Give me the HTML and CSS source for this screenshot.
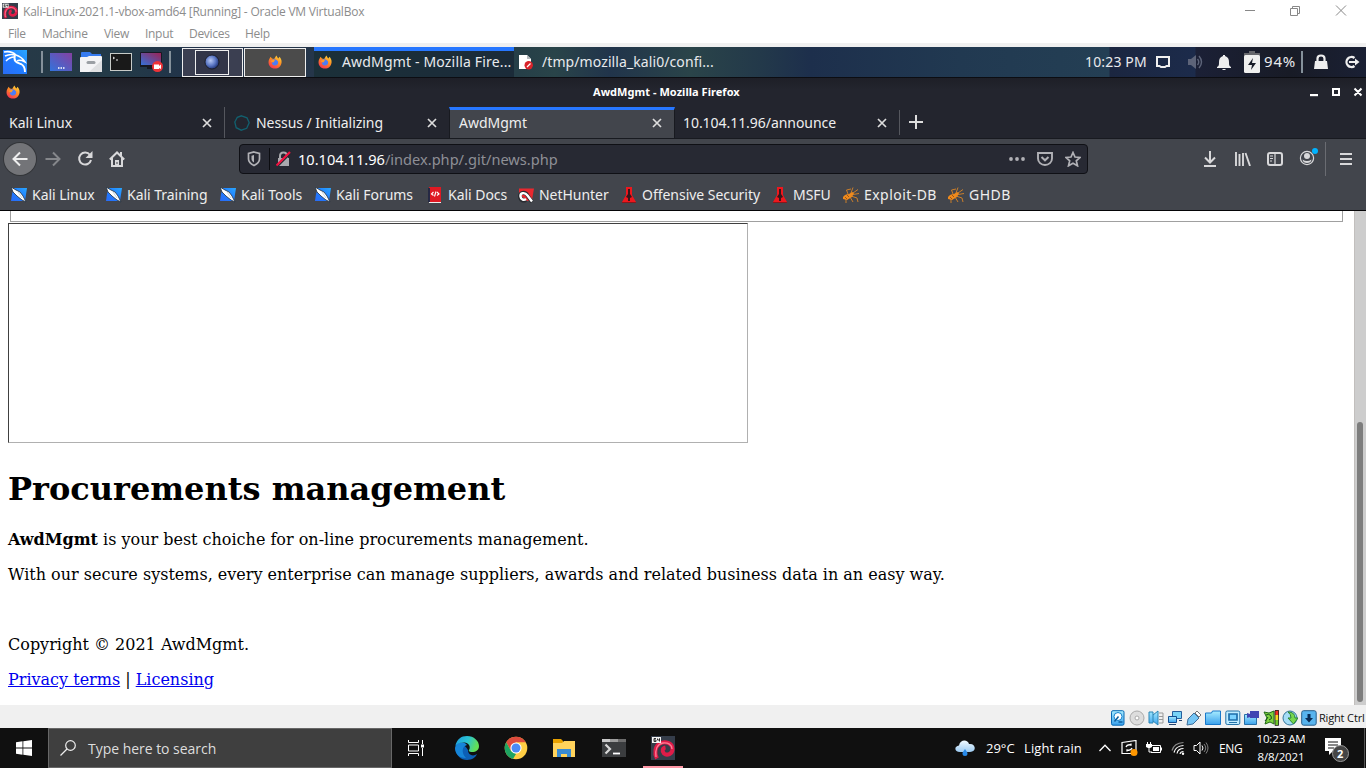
FILE: index.html
```html
<!DOCTYPE html>
<html lang="en">
<head>
<meta charset="utf-8">
<title>AwdMgmt</title>
<link rel="stylesheet" href="styles.css">
</head>
<body>
<svg class="defs" aria-hidden="true">
  <defs>
    <linearGradient id="gBlue" x1="0" y1="1" x2="1" y2="0"><stop offset="0" stop-color="#2a6cf5"/><stop offset=".5" stop-color="#1f7cff"/><stop offset="1" stop-color="#2aa8ff"/></linearGradient>
    <linearGradient id="gDesk" x1="0" y1="1" x2="1" y2="0"><stop offset="0" stop-color="#3273dc"/><stop offset="1" stop-color="#8540a0"/></linearGradient>
    <linearGradient id="gRec" x1="0" y1="1" x2="1" y2="0"><stop offset="0" stop-color="#3273dc"/><stop offset="1" stop-color="#a02050"/></linearGradient>
    <linearGradient id="gFox" x1=".8" y1="0" x2=".2" y2="1"><stop offset="0" stop-color="#ffd83a"/><stop offset=".45" stop-color="#ff8a22"/><stop offset="1" stop-color="#f52d55"/></linearGradient>
    <radialGradient id="gOrb" cx=".4" cy=".4" r=".6"><stop offset="0" stop-color="#b8c8f4"/><stop offset=".6" stop-color="#5a76c4"/><stop offset="1" stop-color="#24387c"/></radialGradient>
    <linearGradient id="gEdge" x1="0" y1="0" x2="1" y2=".3"><stop offset="0" stop-color="#1b9de2"/><stop offset=".55" stop-color="#2bc3d2"/><stop offset="1" stop-color="#62e055"/></linearGradient>
    <linearGradient id="gCloud" x1="0" y1="0" x2="0" y2="1"><stop offset="0" stop-color="#f2faff"/><stop offset="1" stop-color="#9ccbf2"/></linearGradient>
    <linearGradient id="gVb" x1="0" y1="0" x2="0" y2="1"><stop offset="0" stop-color="#a8ecff"/><stop offset="1" stop-color="#39a0ec"/></linearGradient>
  </defs>
  <symbol id="debian" viewBox="0 0 24 24"><path fill="#353d4a" d="M0 0h24v24H0z"/><path d="M6 22.500C3 17 4 10 9 7.500c5-3 12.500-.5 12.500 5.500 0 5-5.500 7-8.500 4.500-2.300-2.300-1.500-5.500 1.500-6" fill="none" stroke="#e01c48" stroke-width="4"/><path d="M5 21c-1-7 1-13 7-14 5-.8 9 2 9 6" fill="none" stroke="#ff7a94" stroke-width="1.400"/><path fill="#f4f4f4" d="M1 1h9v6H1z"/><path d="M5 2.500H3v3h2V4H3M6.500 2.500V4h2V2.500v3" fill="none" stroke="#222" stroke-width=".9"/></symbol>
  <symbol id="kali" viewBox="0 0 24 24"><path fill="url(#gBlue)" d="M0 0h24v24H0z"/><path d="M1 2c5-1 9 0 12 3 3 1 6 2 9 7l-3-1.500c-2-.5-4-.5-5 .5M2 6c4-2 7-2 10-1M3 11c3-3 5-4 8-4" fill="none" stroke="#fff" stroke-width="1.500"/><path d="M12 5c-2 7 2 7.500 6 9 3 1.500 4 4 4 8" fill="none" stroke="#fff" stroke-width="1.900"/></symbol>
  <symbol id="kbm" viewBox="0 0 16 16"><path fill="url(#gBlue)" d="M3 1h13l-2 13H0L1 7z"/><path d="M0 0l5 3 4 2 3 4 3 6-4-2-5-4-4-4z" fill="#fff" stroke="#203040" stroke-width=".8"/><path d="M7 5l4 6" stroke="#b9c9d6" stroke-width=".8"/></symbol>
  <symbol id="desk" viewBox="0 0 22 18"><path fill="url(#gDesk)" d="M0 0h22v18H0z"/><path d="M8 15h1.500m1 0H12m1 0h1.500" stroke="#fff" stroke-width="1.500"/></symbol>
  <symbol id="folder" viewBox="0 0 22 20"><path fill="#367bf0" d="M1 1q0-1 1-1h8l2 2h9v6H1z"/><path fill="#f3f3f5" d="M0 6q0-1 1-1h6l2-1h12q1 0 1 1v15H0z"/><path fill="#dfe0e2" d="M22 8v12H9z"/><rect x="6.500" y="9" width="9" height="3" rx="1.500" fill="#9b9fa4"/></symbol>
  <symbol id="term" viewBox="0 0 22 18"><rect x=".5" y=".5" width="21" height="17" fill="#191919" stroke="#c7cbc8"/><path d="M3 4l1.500 1L3 6m3 1h2" fill="none" stroke="#eee"/></symbol>
  <symbol id="rec" viewBox="0 0 24 20"><path fill="url(#gRec)" stroke="#171924" d="M.5.5h21v13H.5z"/><path fill="#161821" d="M0 13h22v2h-8v2H7v-2H0z"/><circle cx="17.500" cy="14.500" r="5.500" fill="#ec3338"/><path fill="#fff" d="M14 12.500h5V17h-5zM19 14l2-1.500V17l-2-1z"/></symbol>
  <symbol id="orb" viewBox="0 0 16 16"><circle cx="8" cy="8" r="7" fill="url(#gOrb)" stroke="#15151c" stroke-width=".8"/></symbol>
  <symbol id="fox" viewBox="0 0 16 16"><path fill="url(#gFox)" d="M1.500 4.500L3 2l1.500 2L7 4.500 9.500.5c1 1 1 2.500 2.500 3.500l1-2c2 2 2.700 4 2.500 6.500-.4 4.200-3.500 7-7.500 7C3 15.500.5 12 .6 8c.1-1.600.4-2.600.9-3.500z"/><path fill="#4b7cf5" d="M4.500 5.500c3-1.500 6 0 7 2 .6 3-1.500 4.700-4 4.500C5.500 12 4.300 10 4.500 8.500L6.500 8z"/><path fill="#ff9a2a" d="M3 7l3-2 2 1-2 2.500z"/></symbol>
  <symbol id="doc" viewBox="0 0 14 16"><path fill="#fff" d="M0 1h8l4 4v10H0z"/><path fill="#b5b9bd" d="M8 1l4 4H8z"/><circle cx="9.700" cy="11.300" r="4.200" fill="#d9232a"/><path d="M8 13l3.500-3.500" stroke="#fff" stroke-width="1.200"/></symbol>
  <symbol id="screen" viewBox="0 0 14 12"><path d="M1 1h12v9H10.500L9 11H5L3.500 10H1z" fill="none" stroke="#f0f0f0" stroke-width="2"/></symbol>
  <symbol id="vol" viewBox="0 0 16 16"><path fill="#5d6479" d="M1 5h3l5-4v14l-5-4H1z"/><path d="M10.500 5q2.500 3 0 6M12 2q5 6 0 12" fill="none" stroke="#5d6479" stroke-width="1.400"/></symbol>
  <symbol id="bell" viewBox="0 0 14 15"><path fill="#eee" d="M6 0h2v1c3 1 4 3 4 6 0 3 0 4 2 5v1H0v-1c2-1 2-2 2-5 0-3 1-5 4-6zM5 14h4l-1 1H6z"/></symbol>
  <symbol id="batt" viewBox="0 0 16 22"><path fill="#66676c" d="M5 0h6v2h5v4H0V2h5z"/><rect y="4" width="16" height="18" rx="1.500" fill="#f0f0ef"/><path fill="#171b26" d="M9 7l-5 7h4l-1 5 5-7H8z"/></symbol>
  <symbol id="lock" viewBox="0 0 14 16"><path fill="#eee" d="M1 7h12l1 8H0z"/><path d="M3.500 8V4.500q0-3 3.500-3t3.500 3V8" fill="none" stroke="#eee" stroke-width="2.200"/></symbol>
  <symbol id="logout" viewBox="0 0 16 14"><path d="M10.500 3A5 5 0 1 0 10.500 11" fill="none" stroke="#eee" stroke-width="2.300"/><path d="M5 7h7" stroke="#eee" stroke-width="2"/><path fill="#eee" d="M11 3.500L15.500 7 11 10.500z"/></symbol>
  <symbol id="x" viewBox="0 0 10 10"><path d="M1 1l8 8M9 1L1 9" stroke="currentColor" stroke-width="1.700"/></symbol>
  <symbol id="nessus" viewBox="0 0 16 16"><path d="M7.500.8l5.500 2 2.200 5-2.500 5.500-5.500 1.900-5-2.500L.8 7l2.500-4.700z" fill="none" stroke="#12606f" stroke-width="1.300"/></symbol>
  <symbol id="back" viewBox="0 0 16 16"><path d="M15.500 8H1.500M8 1.500L1.500 8 8 14.500" fill="none" stroke="currentColor" stroke-width="2"/></symbol>
  <symbol id="reload" viewBox="0 0 16 16"><path d="M13 4A6 6 0 1 0 14 9" fill="none" stroke="#d8d8da" stroke-width="2"/><path fill="#d8d8da" d="M15.500 0v7h-7z"/></symbol>
  <symbol id="home" viewBox="0 0 16 16"><path d="M.8 8.500L8 1.500l7.200 7M3 7v8h10V7" fill="none" stroke="#d8d8da" stroke-width="2"/><path fill="#d8d8da" d="M11 1h2v4h-2zM6 9h4v6H6z"/><path fill="#42454c" d="M7.500 11h1v2h-1z"/></symbol>
  <symbol id="shield" viewBox="0 0 14 16"><path d="M7 1l5.500 1.500V8c0 3-2.500 5-5.500 6.500C4 13 1.500 11 1.500 8V2.500z" fill="none" stroke="#b1b1b6" stroke-width="1.700"/><path fill="#b1b1b6" d="M7 4l-2.500.8V8c0 2 1.500 3 2.500 3.500z"/></symbol>
  <symbol id="nolock" viewBox="0 0 16 16"><path fill="#a9a9ae" d="M2 7h11v8H2z"/><path d="M4 7V5q0-3.500 3.500-3.500T11 5v2" fill="none" stroke="#a9a9ae" stroke-width="2"/><path d="M1.500 15.500L15 2" stroke="#272933" stroke-width="1.500"/><path d="M.5 14.500L14 1" stroke="#f3103f" stroke-width="2.200"/></symbol>
  <symbol id="dots" viewBox="0 0 16 4"><g fill="#b1b1b6"><circle cx="2" cy="2" r="1.900"/><circle cx="8" cy="2" r="1.900"/><circle cx="14" cy="2" r="1.900"/></g></symbol>
  <symbol id="pocket" viewBox="0 0 16 14"><path d="M1 1h14v5.500a7 6.500 0 0 1-14 0z" fill="none" stroke="#b1b1b6" stroke-width="1.900"/><path d="M4.500 5L8 8.300 11.500 5" fill="none" stroke="#b1b1b6" stroke-width="2"/></symbol>
  <symbol id="star" viewBox="0 0 16 16"><path d="M8 1.500l2 4.500 5 .5-3.700 3.300 1.200 5L8 12.200l-4.500 2.600 1.200-5L1 6.500 6 6z" fill="none" stroke="#b1b1b6" stroke-width="1.700"/></symbol>
  <symbol id="down" viewBox="0 0 12 16"><path d="M6 0v11M1 6.500l5 5 5-5M0 15h12" fill="none" stroke="#d8d8da" stroke-width="2"/></symbol>
  <symbol id="lib" viewBox="0 0 16 14"><path d="M1 0v14M4.500 2v12M8 1v13M10.500 1L15 14" fill="none" stroke="#d8d8da" stroke-width="1.900"/></symbol>
  <symbol id="side" viewBox="0 0 16 14"><rect x="1" y="1" width="14" height="12" rx="2" fill="none" stroke="#d8d8da" stroke-width="2"/><path d="M8 1v12M3 4h3M3 6.500h3M3 9h2" stroke="#d8d8da" stroke-width="1.200"/></symbol>
  <symbol id="acct" viewBox="0 0 20 20"><circle cx="8" cy="11" r="6.600" fill="none" stroke="#d8d8da" stroke-width="1.200"/><circle cx="8" cy="9" r="3" fill="#d8d8da"/><path fill="#d8d8da" d="M3.500 12.500q4.500 3 9 0Q12 16 8 16t-4.500-3.500z"/><circle cx="16" cy="4" r="3" fill="#00b3ff"/></symbol>
  <symbol id="burger" viewBox="0 0 12 12"><path d="M0 1h12M0 6h12M0 11h12" stroke="#d8d8da" stroke-width="2"/></symbol>
  <symbol id="docs" viewBox="0 0 14 16"><path fill="#df1923" d="M1 0h12v15H1z"/><path fill="#262944" d="M0 1h2v14H0z"/><path fill="#eee" d="M1 15h12v1H1z"/><path d="M5.500 5L3.500 7l2 1.500M9 5l2 2-2 1.500M8 4.500l-1.500 5" fill="none" stroke="#fff" stroke-width="1.100"/></symbol>
  <symbol id="net" viewBox="0 0 16 16"><path fill="#e9282f" d="M1 1.500h15L14 13l-5 1L1 7z"/><path d="M14 15L9.500 8.500C7 4 1 5.500 2 10s4 4 6 3" fill="none" stroke="#282b30" stroke-width="3.800"/><path d="M14 14.500L9.500 8.500C6.500 4.500 2 6 2.500 9.500S6 13.500 8 12" fill="none" stroke="#fff" stroke-width="2.400"/></symbol>
  <symbol id="offsec" viewBox="0 0 14 16"><path fill="#ed171d" d="M4 0h6v8l4 7H0l4-7z"/><path fill="#35171b" d="M6 2h2v5l2 3-2 1v3H6v-3l-2-1 2-3z"/><path fill="#8a161b" d="M0 15h14v1H0z"/></symbol>
  <symbol id="bug" viewBox="0 0 16 16"><path fill="#ef8a1c" d="M0 10q2-3 6-3l3-2 2 1-2 4-5 3-4-1z"/><path d="M5 7L3.500 3 8 2M8 6l2-5.500M10 6l5-3.500M10 7.500l6-1M8 9l6 2 1 4M7 10l3 5M3 12l0 4" fill="none" stroke="#d98427" stroke-width=".9"/><path d="M2 10l2 2m0-4l2 2" stroke="#9c5512"/></symbol>
  <symbol id="win" viewBox="0 0 16 16"><path fill="#fff" d="M0 2.300L6.500 1.300v6.300H0zM7.300 1.200L16 0v7.600H7.300zM0 8.400h6.500v6.300L0 13.700zM7.300 8.400H16V16l-8.700-1.200z"/></symbol>
  <symbol id="search" viewBox="0 0 16 16"><circle cx="10.500" cy="5.500" r="4.800" fill="none" stroke="#eee" stroke-width="1.200"/><path d="M7 9L.5 15.500" stroke="#eee" stroke-width="1.300"/></symbol>
  <symbol id="tasks" viewBox="0 0 16 16"><path d="M.5 0v2.500h10V0M.5 16v-2.500h10V16M.5 5h10v6H.5zM14.500 0v4M14.500 8v8" fill="none" stroke="#fff"/><path fill="#fff" d="M13 4.500h3v3h-3z"/></symbol>
  <symbol id="edge" viewBox="0 0 24 24"><path fill="#0c5fb5" d="M1 8C-1 18 5 24 12 24c5 0 9-3 10-6-4 3-9 1-9-4-3-6-10-8-12-6z"/><path fill="#1685d8" d="M0 12C2 5 9 5 12 9c-5 1-6 8-1 13C4 22 0 18 0 12z"/><path fill="url(#gEdge)" d="M.3 10C2 3 6 0 12 0c7 0 12 5 12 10 0 4-3 6-7 6-3 0-4-1-2.500-3 1-3-1-6-5-6.500C5 6 1.500 8 .3 10z"/></symbol>
  <symbol id="chrome" viewBox="0 0 24 24"><circle cx="12" cy="12" r="11.300" fill="#ffce44"/><path fill="#dd4b3e" d="M2.200 6.300A11.300 11.300 0 0 1 21.800 6.300H12L7 15z"/><path fill="#1da462" d="M2.200 6.300l4.800 8.700 5 3-3 4.900A11.300 11.300 0 0 1 2.200 6.300z"/><circle cx="12" cy="12" r="5.600" fill="#fff"/><circle cx="12" cy="12" r="4.500" fill="#4a8af4"/></symbol>
  <symbol id="explorer" viewBox="0 0 22 19"><path fill="#e8a100" d="M0 0h8l2 2v4H0z"/><path fill="#ffd35c" d="M0 4h9l2-2h11v16H0z"/><path fill="#398bd2" d="M4 10h14v8h-4v-3H8v3H4z"/></symbol>
  <symbol id="cmd" viewBox="0 0 24 18"><path fill="#3b3d3f" d="M0 0h24v18H0z"/><path fill="#c9c9c9" d="M0 0h8v3H0z"/><path fill="#9d9d9d" d="M8 0h8v3H8z"/><path fill="#6d6d6d" d="M16 0h8v3h-8z"/><path d="M3.500 5.500L8 10l-4.500 4.500" fill="none" stroke="#d8d8d8" stroke-width="2.200"/><path d="M11 14.500h7" stroke="#fff" stroke-width="1.800"/></symbol>
  <symbol id="weather" viewBox="0 0 20 16"><path fill="url(#gCloud)" d="M5 12C-1 12-1 6 4 5.500 5-1 13-1 14 4c7-1 8 8 1 8z"/><path fill="#2789e8" d="M10 9c2 3 2.500 3.500 2.500 4.500a2.500 2.500 0 0 1-5 0C7.500 12.500 8 12 10 9z"/></symbol>
  <symbol id="chev" viewBox="0 0 12 8"><path d="M.5 7L6 1.200 11.500 7" fill="none" stroke="#fff" stroke-width="1.300"/></symbol>
  <symbol id="upd" viewBox="0 0 17 16"><path d="M1 2.500l14-2v13H1z" fill="none" stroke="#fff" stroke-width="1.200"/><path d="M5 7q1-3 5-2V3.500M11 8q-1 3-5 2v1.500" fill="none" stroke="#fff" stroke-width="1.300"/><circle cx="13" cy="12.500" r="3.500" fill="#ff9700"/></symbol>
  <symbol id="plug" viewBox="0 0 16 12"><path d="M5 3.500h9.500v7H5" fill="none" stroke="#fff"/><path fill="#fff" d="M7 5h6v4H7zM15 5.500h1v3h-1zM0 2h6v3L4 6H2L0 5z"/><path d="M1.500 0v2M4.500 0v2M3 6v4h3" stroke="#fff" fill="none"/></symbol>
  <symbol id="wifi" viewBox="0 0 14 14"><g fill="none" stroke-width="1.200"><path stroke="#888" d="M1 9.500Q3 2 12.500 1.500"/><path stroke="#fff" d="M3 11.500Q4.500 5 12.500 4.500M6 12.500q1-5 6.500-5M9 13q.5-2.500 3.500-2.500"/></g><circle cx="12" cy="12.700" r="1.200" fill="#fff"/></symbol>
  <symbol id="snd" viewBox="0 0 16 14"><path d="M1 4.500h2.500L7 1v12L3.500 9.500H1z" fill="none" stroke="#fff"/><path d="M9 4.500q2 2.500 0 5" fill="none" stroke="#fff"/><path d="M11 3q3.500 4 0 8M13 1.500q4 5.500 0 11" fill="none" stroke="#808080"/></symbol>
  <symbol id="note" viewBox="0 0 24 24"><path fill="#fff" d="M0 0h16v13H8l-4 4v-4H0z"/><path d="M3 4h10M3 7h10M3 10h6" stroke="#101010"/><circle cx="15.500" cy="15.500" r="8" fill="#454545" stroke="#999"/></symbol>
  <symbol id="v1" viewBox="0 0 15 16"><rect x="1" y=".7" width="12.500" height="14.500" rx="1.500" fill="url(#gVb)" stroke="#0869b4"/><circle cx="7.500" cy="6.500" r="4" fill="#fff" stroke="#1682cd"/><path d="M8 6.500l-4 5M8 12h4" stroke="#0d5f9f" stroke-width="1.500"/></symbol>
  <symbol id="v2" viewBox="0 0 16 16"><circle cx="8" cy="8" r="7" fill="#ddd" stroke="#aaa"/><circle cx="8" cy="8" r="2" fill="#fff" stroke="#aaa"/></symbol>
  <symbol id="v3" viewBox="0 0 16 16"><path d="M1 2h4v11H1zM5 5l5-4v14l-5-4" fill="url(#gVb)" stroke="#2b85b5"/><path d="M11 3h4v10h-4M11 6.500h4M11 9.500h4" fill="none" stroke="#999"/></symbol>
  <symbol id="v4" viewBox="0 0 16 16"><path fill="#78d3f6" stroke="#265f9d" d="M5.500 1.500h9v7h-9z"/><path fill="url(#gVb)" stroke="#124f93" d="M1.500 6.500h8v6h-8z"/><path d="M2 14.500h7M12 10.500h3" stroke="#26446f"/></symbol>
  <symbol id="v5" viewBox="0 0 16 16"><path d="M1 15l1-6 6-6 5 5-6 6z" fill="#76c6f5" stroke="#3e6e9a"/><path d="M9 3l2-2 4 4-2 2z" fill="#fff" stroke="#777"/></symbol>
  <symbol id="v6" viewBox="0 0 16 16"><path d="M.5 3h6l1-2h8v13.500H.5z" fill="url(#gVb)" stroke="#1878ca"/></symbol>
  <symbol id="v7" viewBox="0 0 16 16"><rect x=".8" y="1" width="14" height="13.500" rx="1.500" fill="#c1ecff" stroke="#2472a8"/><path d="M4 4h8v6H4z" fill="#7bd2ff" stroke="#1e6dab" stroke-width="1.700"/><path d="M4 12.500h8" stroke="#2472a8"/></symbol>
  <symbol id="v8" viewBox="0 0 16 16"><path fill="url(#gVb)" stroke="#276fa6" d="M.5 4.500h12v10H.5z"/><path fill="#4145b2" d="M6 1h9v7H6zM3 3l3 1v3L3 8z"/></symbol>
  <symbol id="v9" viewBox="0 0 16 16"><path fill="#7dd13f" stroke="#226a19" d="M1 2l5 1 5-2v13l-4-2-5 2 2-6z"/><path d="M3 5q3-2 5 1t-2 4M5 7l-3 4" fill="none" stroke="#114f19"/><path fill="#ef2e22" d="M12 0h4v6h-4z"/><path fill="#f4d821" d="M12 5h4v5h-4z"/><path fill="#6fc52e" d="M12 10h4v5h-4z"/><path d="M12 .5h3.500v15H12z" fill="none" stroke="#222" stroke-width=".8"/></symbol>
  <symbol id="v10" viewBox="0 0 16 16"><circle cx="8" cy="8" r="7" fill="#a4dcf6" stroke="#34749a"/><path d="M6 2q7 0 7 6h3l-4.500 6L6 8h3q0-4-3-6z" fill="#77d64e" stroke="#298533"/></symbol>
  <symbol id="v11" viewBox="0 0 16 16"><rect x=".7" y=".7" width="14.500" height="14.500" rx="2" fill="#58b4ee" stroke="#285e8b"/><path d="M6.500 4h3v4H12l-4 4.500L4 8h2.500z" fill="#092b54"/></symbol>
</svg>

<header class="vm-title">
  <svg class="i16"><use href="#debian"/></svg>
  <span class="vm-name">Kali-Linux-2021.1-vbox-amd64 [Running] - Oracle VM VirtualBox</span>
  <svg class="vm-ctl" viewBox="0 0 104 12"><g fill="none" stroke="#888"><path d="M0 6.500h10M45.500 4.500h7v7h-7zM47.500 4V2.500h7v7H53M91 1.500l10 10M101 1.500l-10 10"/></g></svg>
</header>
<nav class="vm-menu"><span>File</span><span>Machine</span><span>View</span><span>Input</span><span>Devices</span><span>Help</span></nav>

<section class="panel">
  <svg class="kali-ic"><use href="#kali"/></svg><i class="sep"></i>
  <svg class="p1"><use href="#desk"/></svg><svg class="p2"><use href="#folder"/></svg><svg class="p1"><use href="#term"/></svg><svg class="p3"><use href="#rec"/></svg><i class="sep"></i>
  <div class="pager"><div class="mini"><svg class="i16"><use href="#orb"/></svg></div></div>
  <div class="pager lit"><svg class="i14"><use href="#fox"/></svg></div>
  <div class="task active"><svg class="i14"><use href="#fox"/></svg><span class="t1">AwdMgmt - Mozilla Fire...</span></div>
  <div class="task"><svg class="i-doc"><use href="#doc"/></svg><span class="t2">/tmp/mozilla_kali0/confi...</span></div>
  <span class="clock">10:23 PM</span>
  <svg class="s-screen"><use href="#screen"/></svg><svg class="i16"><use href="#vol"/></svg><svg class="s-bell"><use href="#bell"/></svg><svg class="s-batt"><use href="#batt"/></svg>
  <span class="pct">94%</span><i class="sep"></i><svg class="s-lock"><use href="#lock"/></svg><svg class="s-out"><use href="#logout"/></svg>
</section>

<section class="fx-title">
  <svg class="i14"><use href="#fox"/></svg><span>AwdMgmt - Mozilla Firefox</span>
  <svg class="fx-ctl" viewBox="0 0 54 10"><path fill="#fff" d="M0 7h8v2.200H0z"/><path d="M23 2h6v6h-6zM44.500 1.500l7 7M51.500 1.500l-7 7" fill="none" stroke="#fff" stroke-width="2"/></svg>
</section>

<nav class="tabs">
  <div class="tab"><span>Kali Linux</span><svg class="close"><use href="#x"/></svg></div>
  <div class="tab split"><svg class="i16"><use href="#nessus"/></svg><span>Nessus / Initializing</span><svg class="close"><use href="#x"/></svg></div>
  <div class="tab on"><span>AwdMgmt</span><svg class="close"><use href="#x"/></svg></div>
  <div class="tab last"><span>10.104.11.96/announce</span><svg class="close"><use href="#x"/></svg></div>
  <div class="newtab"><svg viewBox="0 0 14 14"><path d="M7 0v14M0 7h14" stroke="#ddd" stroke-width="2"/></svg></div>
</nav>

<section class="navbar">
  <div class="back"><svg class="i16"><use href="#back"/></svg></div>
  <svg class="i16 fwd"><use href="#back"/></svg><svg class="i16"><use href="#reload"/></svg><svg class="i16"><use href="#home"/></svg>
  <div class="url">
    <svg class="u-shield"><use href="#shield"/></svg><i></i><svg class="i16"><use href="#nolock"/></svg>
    <span><b>10.104.11.96</b>/index.php/.git/news.php</span>
    <svg class="u-dots"><use href="#dots"/></svg><svg class="u-pocket"><use href="#pocket"/></svg><svg class="i16"><use href="#star"/></svg>
  </div>
  <svg class="n-down"><use href="#down"/></svg><svg class="n-lib"><use href="#lib"/></svg><svg class="n-lib"><use href="#side"/></svg><svg class="n-acct"><use href="#acct"/></svg><i class="n-sep"></i><svg class="n-burger"><use href="#burger"/></svg>
</section>

<nav class="marks">
  <a><svg class="i16"><use href="#kbm"/></svg>Kali Linux</a>
  <a><svg class="i16"><use href="#kbm"/></svg>Kali Training</a>
  <a><svg class="i16"><use href="#kbm"/></svg>Kali Tools</a>
  <a><svg class="i16"><use href="#kbm"/></svg>Kali Forums</a>
  <a><svg class="i16"><use href="#docs"/></svg>Kali Docs</a>
  <a><svg class="i16"><use href="#net"/></svg>NetHunter</a>
  <a><svg class="i16"><use href="#offsec"/></svg>Offensive Security</a>
  <a><svg class="i16"><use href="#offsec"/></svg>MSFU</a>
  <a class="wide"><svg class="i16"><use href="#bug"/></svg>Exploit-DB</a>
  <a class="wide"><svg class="i16"><use href="#bug"/></svg>GHDB</a>
</nav>

<main class="view">
  <article class="doc">
    <div class="cell"></div>
    <div class="frame"></div>
    <h1>Procurements management</h1>
    <p><b>AwdMgmt</b> is your best choiche for on-line procurements management.</p>
    <p>With our secure systems, every enterprise can manage suppliers, awards and related business data in an easy way.</p>
    <p>&nbsp;</p>
    <p>Copyright © 2021 AwdMgmt.</p>
    <p><a href="#">Privacy terms</a> | <a href="#">Licensing</a></p>
  </article>
  <div class="scroll"><div class="thumb"></div></div>
</main>

<footer class="vm-status">
  <svg><use href="#v1"/></svg><svg><use href="#v2"/></svg><svg><use href="#v3"/></svg><svg><use href="#v4"/></svg><svg><use href="#v5"/></svg><svg><use href="#v6"/></svg><svg><use href="#v7"/></svg><svg><use href="#v8"/></svg><svg><use href="#v9"/></svg><svg><use href="#v10"/></svg><svg><use href="#v11"/></svg><span>Right Ctrl</span>
</footer>

<footer class="taskbar">
  <div class="start"><svg class="i16"><use href="#win"/></svg></div>
  <div class="searchbox"><svg class="i16"><use href="#search"/></svg><span>Type here to search</span></div>
  <div class="app"><svg class="i16"><use href="#tasks"/></svg></div>
  <div class="app"><svg class="i24"><use href="#edge"/></svg></div>
  <div class="app"><svg class="i24"><use href="#chrome"/></svg></div>
  <div class="app"><svg class="a-exp"><use href="#explorer"/></svg></div>
  <div class="app"><svg class="a-cmd"><use href="#cmd"/></svg></div>
  <div class="app running"><svg class="i24"><use href="#debian"/></svg></div>
  <svg class="w-weather"><use href="#weather"/></svg><span class="w-temp">29°C</span><span class="w-rain">Light rain</span>
  <svg class="w-chev"><use href="#chev"/></svg><svg class="w-upd"><use href="#upd"/></svg><svg class="w-plug"><use href="#plug"/></svg><svg class="w-wifi"><use href="#wifi"/></svg><svg class="w-snd"><use href="#snd"/></svg>
  <span class="w-eng">ENG</span>
  <div class="w-time"><span>10:23 AM</span><span>8/8/2021</span></div>
  <div class="w-note"><svg><use href="#note"/></svg><b>2</b></div>
  <i class="peek"></i>
</footer>
</body>
</html>
```

FILE: styles.css
```css
* { box-sizing: border-box; }
body { margin: 0; width: 1366px; height: 768px; overflow: hidden; background: #fff; font-family: "Noto Sans", sans-serif; font-size: 14px; white-space: nowrap; }
svg { display: block; flex: none; }
.defs { position: absolute; width: 0; height: 0; }
.i14 { width: 14px; height: 14px; }
.i16 { width: 16px; height: 16px; }
.i24 { width: 24px; height: 24px; }

/* VirtualBox window chrome */
.vm-title { height: 24px; display: grid; grid-template-columns: 21px 1222px 104px; padding-left: 2px; align-items: center; font: 12px "Open Sans", sans-serif; color: #8c8c8c; }
.vm-title .i16 { margin-top: -2px; }
.vm-name { letter-spacing: -0.22px; margin-top: -1px; }
.vm-ctl { width: 104px; height: 12px; margin-top: -4px; }
.vm-menu { height: 23px; border-bottom: 4px solid #f0f0f0; display: grid; grid-template-columns: 34px 62px 41px 44px 56px auto; padding-left: 8px; align-items: center; font: 12px "Open Sans", sans-serif; letter-spacing: -0.3px; color: #8c8c8c; }

/* Desktop panel */
.panel { height: 30px; display: grid; grid-template-columns: 38px 9px 30px 30px 30px 29px 13px 62px 70px 200px 571px 71px 31px 30px 27px 20px 37px 13px 30px 20px; padding-left: 3px; align-items: center; color: #e8eaed; background: linear-gradient(90deg, #273947 0, #233a47 120px, #21324a 200px, #25364a 314px, #263f48 520px, #294449 555px, #21344b 610px, #2a4449 690px, #23394a 760px, #1d2f4c 810px, #213951 960px, #243f54 1109px, #1b2640 1110px, #1c2b4b 1195px, #1b2036 1196px, #181b26 1290px, #1a2034 1366px); }
.panel span { margin-top: -2px; }
.kali-ic { width: 24px; height: 24px; }
.sep { width: 2px; height: 22px; background: #85919b; }
.p1 { width: 22px; height: 18px; }
.p2 { width: 22px; height: 20px; }
.p3 { width: 24px; height: 20px; }
.pager { width: 61px; height: 29px; border: 1px solid #eee; background: #3b3f51; display: flex; align-items: center; justify-content: center; }
.pager.lit { width: 62px; background: #4b4b4b; }
.mini { width: 34px; height: 25px; margin-right: 2px; border: 1px solid #eee; background: #323548; display: flex; align-items: center; justify-content: center; }
.task { height: 30px; display: flex; align-items: center; padding-left: 4px; gap: 10px; }
.task.active { border-top: 4px solid #2777ff; background: linear-gradient(90deg, #1b3039, #1b2b39); padding-bottom: 4px; }
.i-doc { width: 14px; height: 16px; margin-left: 1px; margin-right: -1px; }
.t1 { letter-spacing: 0.17px; }
.t2 { letter-spacing: 0.09px; }
.clock { letter-spacing: 0.15px; }
.s-screen { width: 14px; height: 12px; }
.s-bell { width: 14px; height: 15px; }
.s-batt { width: 16px; height: 22px; }
.pct { font-size: 15px; letter-spacing: 0.8px; }
.s-lock { width: 14px; height: 16px; }
.s-out { width: 16px; height: 14px; }

/* Browser title and tabs */
.fx-title { height: 30px; border-top: 1px solid #0c0d12; background: linear-gradient(#1e1f27, #23252e 12px); display: grid; grid-template-columns: 587px 717px 54px; padding: 0 0 2px 6px; align-items: center; color: #fff; font-size: 11px; font-weight: 700; letter-spacing: 0.04px; }
.fx-title .i14 { margin-top: 1px; }
.fx-ctl { width: 54px; height: 10px; margin-top: 1px; }
.tabs { height: 32px; background: #23252e; border-bottom: 1px solid #181a20; display: grid; grid-template-columns: 224px 225px 226px 224px auto; color: #eee; }
.tab { display: flex; align-items: center; padding: 0 12px 0 9px; }
.tab span { margin-top: -1px; }
.tab.split { border-left: 1px solid #55575e; }
.tab.split span { margin-left: 6px; letter-spacing: -0.05px; }
.tab.on { background: #42454c; border-top: 3px solid #2777ff; border-left: 1px solid #181a20; border-right: 1px solid #181a20; padding-bottom: 3px; }
.tab.last { padding-left: 8px; letter-spacing: -0.05px; }
.close { width: 10px; height: 10px; margin-left: auto; color: #ddd; }
.newtab { border-left: 1px solid #55575e; margin: 3px 0; padding: 5px 9px; }
.newtab svg { width: 14px; height: 14px; }

/* Browser toolbars */
.navbar { height: 41px; background: #42454c; display: grid; grid-template-columns: 41px 32px 32px 130px 965px 31px 32px 32px 26px 15px 12px; padding: 0 0 1px 4px; align-items: center; }
.back { width: 32px; height: 32px; border-radius: 50%; background: #737478; box-shadow: 0 0 0 1px #333539; color: #eee; display: flex; align-items: center; justify-content: center; }
.fwd { transform: scaleX(-1); color: #85878b; }
.url { width: 849px; height: 30px; margin-top: -1px; border: 1px solid #0f1015; border-radius: 4px; background: #272933; display: grid; grid-template-columns: 22px 7px 22px 711px 28px 28px 16px; align-items: center; padding-left: 7px; color: #8e8f96; font-size: 14.600px; }
.url b { color: #fff; font-weight: 400; }
.url i { width: 1px; height: 22px; background: #0b0c10; }
.u-shield { width: 14px; height: 16px; }
.u-dots { width: 16px; height: 4px; }
.u-pocket { width: 16px; height: 14px; }
.n-down { width: 12px; height: 16px; }
.n-lib { width: 16px; height: 14px; }
.n-acct { width: 20px; height: 20px; margin-top: -4px; }
.n-sep { width: 1px; height: 34px; background: #6a6c72; }
.n-burger { width: 12px; height: 12px; }
.marks { height: 31px; background: #42454c; border-bottom: 1px solid #050507; display: grid; grid-template-columns: 95px 114px 95px 112px 91px 103px 151px 71px 105px auto; padding: 0 0 1px 11px; align-items: center; color: #eee; }
.marks a { display: flex; align-items: center; gap: 5px; letter-spacing: -0.03px; }
.marks a.wide { letter-spacing: 0.45px; }

/* Web page */
.view { height: 494px; display: flex; background: #fff; }
.doc { width: 1354px; padding: 0 8px; font-family: "DejaVu Serif", serif; font-size: 16px; line-height: 19px; color: #000; }
.cell { width: 1333px; height: 11px; margin: 0 0 1px 2px; border: solid #a0a0a0; border-width: 0 1px 1px; }
.frame { width: 740px; height: 220px; border: 1px solid #b0b0b0; border-top-color: #404040; border-left-color: #404040; }
.doc h1 { font-size: 32px; line-height: 37px; margin: 28px 0 22px; }
.doc p { margin: 0 0 16px; }
.doc a { color: #0000ee; }
.scroll { width: 12px; background: #cdcdcd; border-left: 1px solid #c2bfbd; padding: 211px 2px 0; }
.thumb { width: 6px; height: 280px; border-radius: 3px; background: #7d7d7d; }

/* VirtualBox status bar */
.vm-status { height: 23px; background: #f0f0f0; display: grid; grid-template-columns: repeat(10, 19.1px) 18px auto; padding-left: 1110px; padding-top: 2px; align-items: center; font: 11px "Open Sans", sans-serif; color: #111; }
.vm-status svg { width: 16px; height: 16px; }
.vm-status span { letter-spacing: -0.15px; }

/* Windows taskbar */
.taskbar { height: 40px; background: #101010; color: #fff; display: grid; grid-template-columns: 48px 344px 48px 54px 44px 52px 48px 317px 31px 38px 75px 22px 25px 25px 22px 26px 37px 69px 39px 2px; align-items: center; font: 12px "Open Sans", sans-serif; }
.start, .app { height: 40px; display: flex; align-items: center; justify-content: center; }
.searchbox { height: 40px; border: 1px solid #676767; background: #3f3f3f; display: flex; align-items: center; gap: 12px; padding-left: 11px; color: #ddd; font-size: 14px; letter-spacing: -0.03px; }
.app.running { width: 40px; margin-left: 5px; border-bottom: 2px solid #ff98a6; padding-top: 2px; }
.a-exp { width: 22px; height: 19px; }
.a-cmd { width: 24px; height: 18px; }
.w-weather { width: 20px; height: 16px; }
.w-temp, .w-rain { font-size: 13px; }
.w-rain { letter-spacing: 0.1px; }
.w-chev { width: 12px; height: 8px; }
.w-upd { width: 17px; height: 16px; }
.w-plug { width: 16px; height: 12px; }
.w-wifi { width: 14px; height: 14px; }
.w-snd { width: 16px; height: 14px; }
.w-eng { letter-spacing: -0.3px; }
.w-time { width: 50px; display: flex; flex-direction: column; align-items: center; line-height: 18px; font-size: 11.500px; letter-spacing: -0.1px; }
.w-note { position: relative; width: 24px; height: 24px; margin-top: 3px; }
.w-note svg { width: 24px; height: 24px; }
.w-note b { position: absolute; left: 12px; top: 8px; font-size: 11px; line-height: 15px; }
.peek { width: 1px; height: 40px; background: #555; }
```
